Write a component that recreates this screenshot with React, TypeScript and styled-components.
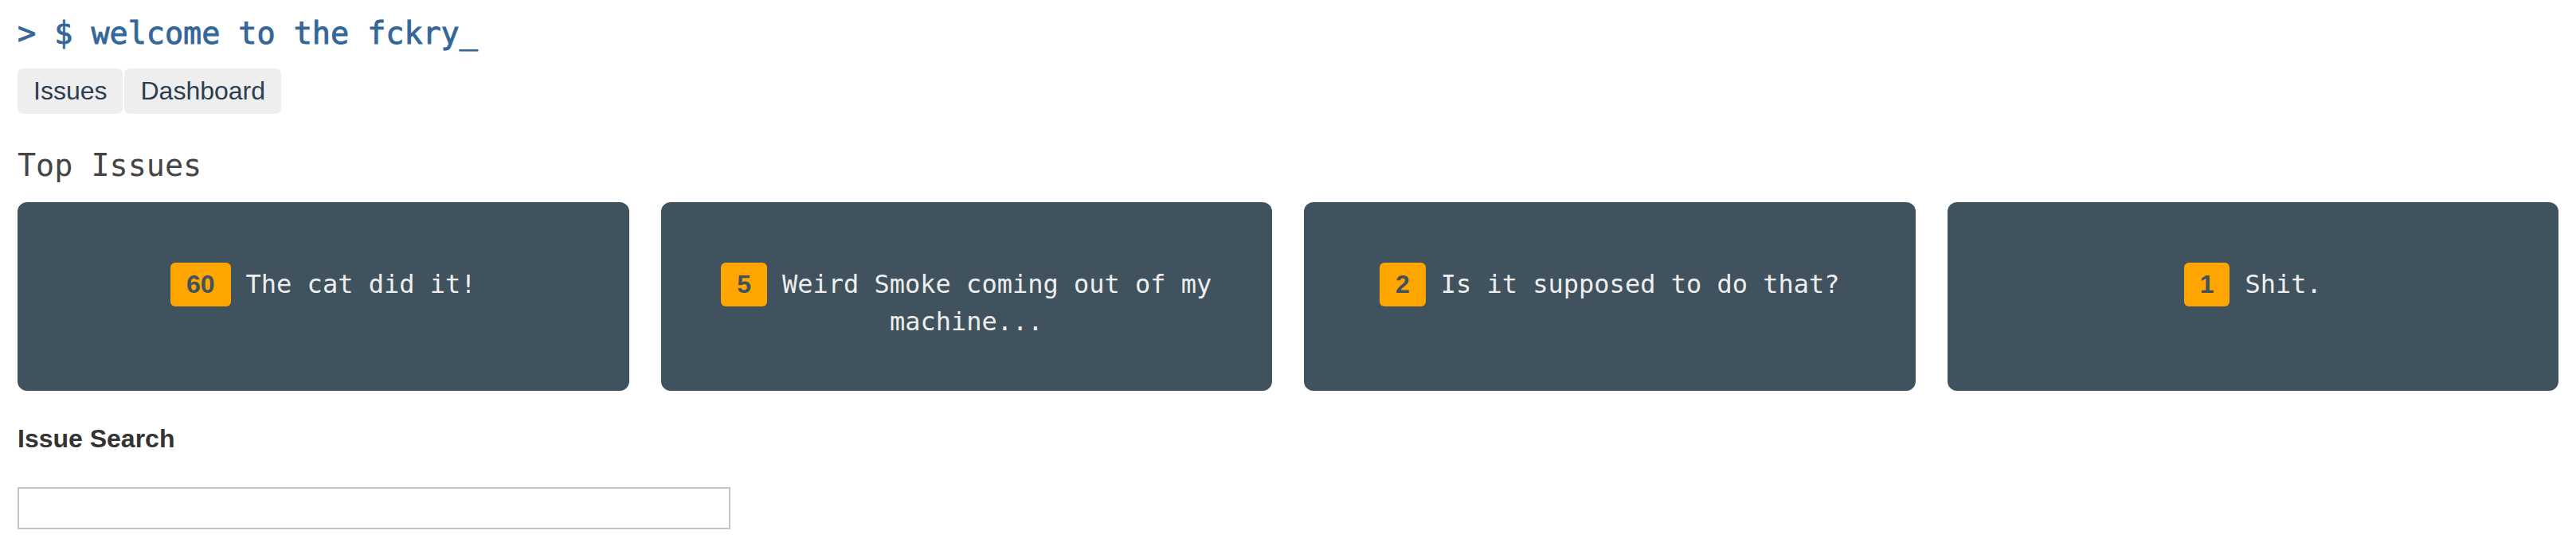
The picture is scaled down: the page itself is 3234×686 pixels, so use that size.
import React from "react";
import styled, { createGlobalStyle } from "styled-components";

const GlobalStyle = createGlobalStyle`
  html, body {
    margin: 0;
    padding: 0;
    background: #ffffff;
  }
  body {
    font-family: "Liberation Sans", Arial, sans-serif;
  }
  * { box-sizing: border-box; }
`;

const Page = styled.div`
  padding: 0 22px;
  display: flex;
  flex-direction: column;
  align-items: stretch;
`;

const Title = styled.h1`
  margin: 19px 0 0;
  font-family: "DejaVu Sans Mono", monospace;
  font-size: 38.4px;
  line-height: 45px;
  font-weight: normal;
  color: #336699;
  -webkit-text-stroke: 0.9px #336699;
`;

const Tabs = styled.nav`
  display: flex;
  gap: 2px;
  margin-top: 22px;
`;

const Tab = styled.button`
  font-family: "Liberation Sans", Arial, sans-serif;
  font-size: 32px;
  line-height: 37px;
  padding: 10px 20px;
  border: none;
  border-radius: 7px;
  background: #eeeeee;
  color: #2c3e50;
  cursor: pointer;
`;

const SectionTitle = styled.h2`
  margin: 42px 0 0;
  font-family: "DejaVu Sans Mono", monospace;
  font-size: 38.4px;
  line-height: 45px;
  font-weight: normal;
  color: #444444;
`;

const CardGrid = styled.div`
  display: grid;
  grid-template-columns: repeat(4, 1fr);
  gap: 40px;
  margin-top: 24px;
`;

const Card = styled.div`
  height: 237px;
  padding: 76px 30px 0;
  border-radius: 12px;
  background: #40525d;
  color: #eeeeee;
  font-family: "DejaVu Sans Mono", monospace;
  font-size: 32px;
  line-height: normal;
  text-align: center;
`;

const Badge = styled.span`
  display: inline-block;
  vertical-align: baseline;
  margin-right: 19px;
  padding: 9px 20px;
  border-radius: 6px;
  background: #ffa500;
  color: #40525d;
  font-family: "Liberation Sans", Arial, sans-serif;
  font-weight: bold;
  font-size: 32px;
  line-height: 37px;
`;

const SearchLabel = styled.h3`
  margin: 42px 0 0;
  font-family: "Liberation Sans", Arial, sans-serif;
  font-size: 32px;
  line-height: 37px;
  font-weight: bold;
  color: #333333;
`;

const SearchInput = styled.input`
  margin-top: 42px;
  width: 895px;
  height: 53px;
  border: 2px solid #c4c4c4;
  border-radius: 0;
  padding: 0 8px;
  font-family: "Liberation Sans", Arial, sans-serif;
  font-size: 28px;
  outline: none;
`;

const issues = [
  { count: 60, title: "The cat did it!" },
  { count: 5, title: "Weird Smoke coming out of my machine..." },
  { count: 2, title: "Is it supposed to do that?" },
  { count: 1, title: "Shit." },
];

export default function App() {
  return (
    <>
      <GlobalStyle />
      <Page>
        <Title>&gt; $ welcome to the fckry_</Title>
        <Tabs>
          <Tab>Issues</Tab>
          <Tab>Dashboard</Tab>
        </Tabs>
        <SectionTitle>Top Issues</SectionTitle>
        <CardGrid>
          {issues.map((issue) => (
            <Card key={issue.title}>
              <Badge>{issue.count}</Badge>
              {issue.title}
            </Card>
          ))}
        </CardGrid>
        <SearchLabel>Issue Search</SearchLabel>
        <div>
          <SearchInput type="text" />
        </div>
      </Page>
    </>
  );
}
